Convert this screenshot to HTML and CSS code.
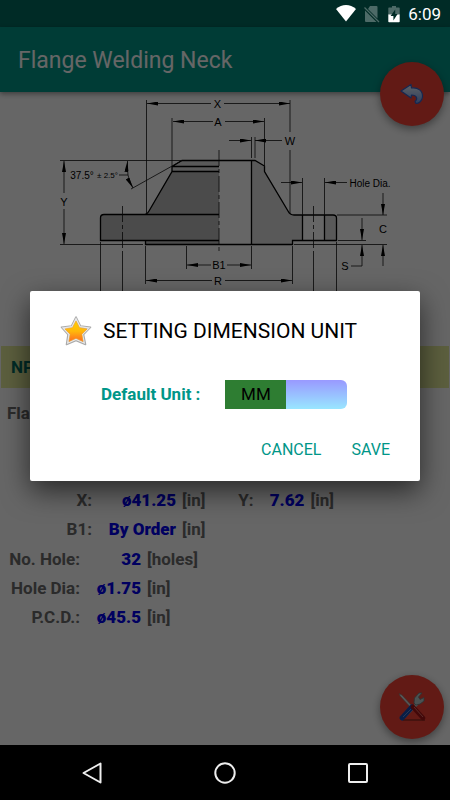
FILE: index.html
```html
<!DOCTYPE html>
<html lang="en">
<head>
<meta charset="utf-8">
<meta name="viewport" content="width=device-width, initial-scale=1">
<title>Flange Welding Neck</title>
<link rel="stylesheet" href="styles.css">
</head>
<body>
<div class="phone">
  <div class="screen">
    <header>
      <div class="statusbar">
        <svg class="wifi" viewBox="0 0 20 17" aria-hidden="true"><path d="M0 4C6-1.3 14-1.3 20 4L10 16.500z" fill="#fff"/></svg>
        <svg class="sim" viewBox="0 0 16 18" aria-hidden="true"><path d="M6 1h6.500q1 0 1 1v11.500L4 4zM1 5.500L12.500 17H2q-1 0-1-1z" fill="#4d6a67"/><path d="M.5 2.500L15 17" stroke="#4d6a67" stroke-width="1.300"/></svg>
        <svg class="battery" viewBox="0 0 12 18" aria-hidden="true"><path d="M4 1h4v1.500h3q.7 0 .7.700V10H.3V3.200q0-.7.7-.7h3z" fill="#4d6a67"/><path d="M.3 9.500h11.400v7q0 .8-.8.800H1.100q-.8 0-.8-.8z" fill="#fff"/><path d="M7.200 4.500L2.600 11h2.800v4.500L9.600 9H7.200z" fill="#002b26"/></svg>
        <span class="clock">6:09</span>
      </div>
      <h1 class="appbar">Flange Welding Neck</h1>
    </header>
    <main class="content">
      <svg class="drawing" viewBox="48 92 354 254" role="img" aria-label="Welding neck flange dimensions">
        <defs>
          <marker id="arrow" viewBox="0 0 11 4" refX="11" refY="2" markerWidth="11" markerHeight="4" markerUnits="userSpaceOnUse" orient="auto-start-reverse"><path d="M0 0L11 2L0 4z"/></marker>
        </defs>
        <path class="steel" d="M182 160.500L172 166.500V171.500L149 211Q147 214.500 143 214.500H104Q100.500 214.500 100.500 218V240.500H145.500V244H219V160.500z"/>
        <path class="cut" d="M182 160.500L172 166.500V171.500H219V160.500zM251.500 160.500H255L264.500 166V171.500L288 211Q290 215 294 215H302.500V240.500H292.500V244.500H251.500zM324.500 215H333Q336.500 215 336.500 218V240.500H324.500z"/>
        <path class="edge" d="M219 160.500H182L172 166.500V171.500L149 211Q147 214.500 143 214.500H104Q100.500 214.500 100.500 218V240.500H219M145.500 240.500V244.500H292.500V240.500H336.500V218Q336.500 215 333 215H294Q290 215 288 211L264.500 171.500V166L255 160.500H219M172 166.500H219M172 171.500H219M143 214.500H219M251.500 160.500V244.500M302.500 215V240.500M324.500 215V240.500"/>
        <path class="thin" d="M146.500 100V213M290 100V132M290 150V214M172 118V166M264.500 118V167M251.500 137V158M255 137V158M60 160.500H182M60 244.500H143M131 189L182 160.500M119 175H128M302.500 178V215M324.500 178V215M337 215H387M338 240.500H366M294 244.500H387M186.500 246V269M251.500 246V269M145.500 246V284M292.500 246V284M100.500 242V346M336.500 242V346M122.500 251V346M313.500 251V346"/>
        <path class="thin dash" d="M219 150V252M122.500 206V250M313.500 206V250"/>
        <g class="thin">
          <path class="arrow" d="M211 103.500H147"/><path class="arrow" d="M224 103.500H290"/>
          <path class="arrow" d="M213 121.500H173"/><path class="arrow" d="M225 121.500H264"/>
          <path class="arrow" d="M229 140.500H251"/><path class="arrow" d="M282 140.500H255"/>
          <path class="arrow" d="M64 193V161"/><path class="arrow" d="M64 209V244"/>
          <path class="arrow" d="M128 175Q127 166 127.500 161"/><path class="arrow" d="M128 175Q129 181 133 188"/>
          <path class="arrow" d="M281 182.500H302"/><path class="arrow" d="M347 182.500H325"/>
          <path class="arrow" d="M383 193V215"/><path class="arrow" d="M383 266V245"/>
          <path class="arrow" d="M362 218V240"/><path class="arrow" d="M351 266H362V245"/>
          <path class="arrow" d="M211 265H187"/><path class="arrow" d="M227 265H251"/>
          <path class="arrow" d="M212 280.500H146"/><path class="arrow" d="M225 280.500H292"/>
        </g>
        <g class="dims">
          <text x="217.500" y="107.500">X</text><text x="218" y="125.500">A</text><text x="290" y="144.500">W</text>
          <text class="word" x="82" y="179">37.5°</text><text class="small" x="107.500" y="178">± 2.5°</text>
          <text class="word" x="370" y="186.500">Hole Dia.</text><text x="64" y="206">Y</text><text x="383" y="233">C</text>
          <text x="345" y="270">S</text><text x="219" y="269">B1</text><text x="218" y="284.500">R</text>
        </g>
      </svg>
      <div class="size">NPS</div>
      <div class="caption">Flange</div>
      <dl class="values wide">
        <dt>X:</dt><dd><b>ø41.25</b> <span>[in]</span></dd><dt>Y:</dt><dd><b>7.62</b> <span>[in]</span></dd>
        <dt>B1:</dt><dd><b>By Order</b> <span>[in]</span></dd>
      </dl>
      <dl class="values">
        <dt>No. Hole:</dt><dd><b>32</b> <span>[holes]</span></dd>
        <dt>Hole Dia:</dt><dd><b>ø1.75</b> <span>[in]</span></dd>
        <dt>P.C.D.:</dt><dd><b>ø45.5</b> <span>[in]</span></dd>
      </dl>
    </main>
    <button class="fab back" type="button" aria-label="Back">
      <svg viewBox="0 0 24 22" aria-hidden="true"><defs><linearGradient id="bk" x2="0" y2="1"><stop stop-color="#eef6ff"/><stop offset="1" stop-color="#6f9ae8"/></linearGradient></defs><path d="M1 8L11 1.500L11.500 5C18 4 23 8 22.500 14C22 18 19 20.500 16 20.500L15 18.500C18 16 17 12 11.500 12L11 15z" fill="url(#bk)" stroke="#3863c9" stroke-width="1.200" stroke-linejoin="round"/></svg>
    </button>
    <button class="fab tools" type="button" aria-label="Settings">
      <svg viewBox="0 0 28 30" aria-hidden="true">
        <path d="M5 28H27" stroke="#962b22" stroke-width="1.500"/>
        <path d="M7 24L19 12" stroke="#b8c8c8" stroke-width="3"/>
        <path d="M16 11L16.500 6L21 1L24 1L20.500 5L22 7.500L26 5.500L26 9L22 12L18 13z" fill="#bccdcd" stroke="#687f83" stroke-width=".8"/>
        <path d="M1 1.500L4 3L16 16L14 17L2 4z" fill="#d8dddd" stroke="#8b6964" stroke-width=".6"/>
        <path d="M4 26L14 15" stroke="#174bb2" stroke-width="5" stroke-linecap="round"/>
        <path d="M5 25L13 17" stroke="#5790db" stroke-width="1"/>
        <path d="M15 15L25 26" stroke="#a61518" stroke-width="4.500" stroke-linecap="round"/>
        <path d="M16 15L25 25" stroke="#e4716a" stroke-width="1"/>
      </svg>
    </button>
    <div class="scrim">
      <form class="dialog" role="dialog" aria-labelledby="dialog-title">
        <h2 class="title" id="dialog-title">
          <svg viewBox="0 0 32 32" aria-hidden="true"><defs><linearGradient id="gold" x2="0" y2="1"><stop stop-color="#ffd000"/><stop offset=".5" stop-color="#ffb80b"/><stop offset="1" stop-color="#ff6a22"/></linearGradient><linearGradient id="rim" x2="1" y2="1"><stop stop-color="#eee"/><stop offset="1" stop-color="#aaa"/></linearGradient></defs><path d="M16 2L20.500 11L30.500 12.200L23.500 19.500L25.500 29.500L16 25.500L6.500 29.500L8 19.500L1.500 12.200L11.500 11z" fill="url(#rim)" stroke="#aaa" stroke-width="1.600" stroke-linejoin="round"/><path d="M16 3.500L20 11.700L29 13L22.500 19.300L24.300 28L16 24.500L7.700 28L9 19.300L3 13L12 11.700z" fill="none" stroke="#e8e8e8" stroke-width="1.200"/><path d="M16 6L19.500 12.700L27 14L21.800 19.300L23 26.500L16 23.200L9 26.500L10.200 19.300L5 14L12.500 12.700z" fill="url(#gold)" stroke="#f7a01b" stroke-width=".6"/></svg>
          SETTING DIMENSION UNIT
        </h2>
        <div class="setting">
          <label for="unit">Default Unit :</label>
          <span class="switch"><input id="unit" type="checkbox" role="switch"><span class="thumb">MM</span></span>
        </div>
        <div class="actions"><button type="button">CANCEL</button><button type="submit">SAVE</button></div>
      </form>
    </div>
  </div>
  <nav class="navbar" aria-label="System">
    <button type="button" aria-label="Back"><svg viewBox="0 0 22 22"><path d="M19.500 1.500V20.500L2.500 11z"/></svg></button>
    <button type="button" aria-label="Home"><svg viewBox="0 0 22 22"><circle cx="11" cy="11" r="9.700"/></svg></button>
    <button type="button" aria-label="Recent apps"><svg viewBox="0 0 22 22"><rect x="2" y="2" width="18" height="18" rx="1"/></svg></button>
  </nav>
</div>
</body>
</html>
```

FILE: styles.css
```css
* { box-sizing: border-box; }
body { margin: 0; font-family: Roboto, sans-serif; background: #000; }
h1, h2, dl, dd { margin: 0; font-weight: 400; }
button { border: 0; padding: 0; background: none; font: inherit; cursor: pointer; }

.phone { min-height: 100vh; display: flex; flex-direction: column; }
.screen { flex: 1; position: relative; background: #fff; overflow: hidden; }

.statusbar {
  height: 27px;
  padding-right: 9px;
  display: flex;
  align-items: center;
  justify-content: flex-end;
  gap: 8px;
  color: #fff;
  background: #006b60;
}
.statusbar > * { position: relative; z-index: 3; }
.wifi { width: 20px; height: 17px; }
.sim { width: 16px; height: 18px; }
.battery { width: 12px; height: 18px; }
.clock { padding-top: 2px; font-size: 17px; line-height: 25px; }

.appbar {
  position: relative;
  padding: 3px 18px 0;
  font-size: 23px;
  line-height: 62px;
  color: #fff;
  background: #009688;
  box-shadow: 0 2px 5px rgba(0, 0, 0, .4);
}

.drawing { display: block; width: 354px; max-width: 100%; margin: 0 auto; }
.steel { fill: #bbb; }
.cut { fill: #dedede; }
.edge { fill: none; stroke: #000; stroke-width: 1.300; }
.thin { fill: none; stroke: #111; stroke-width: .8; }
.arrow { marker-end: url(#arrow); }
.dash { stroke-dasharray: 16 3 4 3; }
.dims { font: 11px "Liberation Sans", sans-serif; text-anchor: middle; }
.word { font-size: 10px; }
.small { font-size: 8px; }

.size {
  margin: 0 1px;
  padding: 0 10px;
  font-size: 17px;
  font-weight: 700;
  line-height: 42px;
  color: #006b60;
  background: #e6ee9c;
}
.caption { padding: 11px 7px 58px; font-size: 17px; font-weight: 700; line-height: 29px; color: #6b6b6b; }

.values {
  display: grid;
  grid-template-columns: 80px auto;
  justify-content: start;
  font-size: 17px;
  font-weight: 700;
  line-height: 29px;
  color: #6b6b6b;
}
.values dt { text-align: right; }
.values dd { display: grid; grid-template-columns: 61px auto; gap: 6px; font-weight: 700; }
.values b { text-align: right; color: #0000f0; }
.wide { grid-template-columns: 92px auto 48px auto; padding-bottom: 1px; }
.wide dd { grid-template-columns: 84px auto; }
.wide dd:nth-of-type(2) { grid-template-columns: 51px auto; }

.fab {
  position: absolute;
  right: 6px;
  width: 64px;
  height: 64px;
  border-radius: 50%;
  display: grid;
  place-items: center;
  background: #f44336;
  box-shadow: 0 3px 8px rgba(0, 0, 0, .4);
}
.back { top: 62px; }
.tools { bottom: 6px; }
.back svg { width: 24px; height: 22px; }
.tools svg { width: 28px; height: 30px; }

.scrim {
  position: absolute;
  inset: 0;
  z-index: 2;
  padding: 27px 30px 0;
  display: flex;
  align-items: center;
  background: rgba(0, 0, 0, .6);
}
.dialog {
  width: 100%;
  padding: 20px 16px 12px 30px;
  border-radius: 2px;
  background: #fff;
  box-shadow: 0 10px 28px rgba(0, 0, 0, .6);
}
.title { display: flex; align-items: center; gap: 11px; font-size: 21px; line-height: 40px; color: #000; }
.title svg { width: 32px; height: 32px; }
.setting { margin: 29px 0 22px; padding-left: 41px; display: flex; align-items: center; gap: 25px; }
.setting label { font-size: 17px; font-weight: 700; line-height: 29px; color: #009688; }
.switch { position: relative; display: block; width: 122px; height: 29px; }
.switch input {
  appearance: none;
  width: 100%;
  height: 100%;
  margin: 0;
  display: block;
  border-radius: 6px;
  background: linear-gradient(#99f, #99e6ff);
}
.thumb {
  position: absolute;
  inset: 0 50% 0 0;
  font-size: 17px;
  line-height: 29px;
  text-align: center;
  color: #000;
  background: #2e7d32;
  pointer-events: none;
}
.switch input:checked + .thumb { inset: 0 0 0 50%; }
.actions { display: flex; justify-content: flex-end; gap: 2px; }
.actions button { padding: 0 14px; font-size: 16px; line-height: 38px; color: #009688; }

.navbar { height: 55px; padding: 0 26px; display: grid; grid-template-columns: repeat(3, 1fr); background: #000; }
.navbar button { display: grid; place-items: center; }
.navbar svg { width: 22px; height: 22px; fill: none; stroke: #eee; stroke-width: 2; stroke-linejoin: round; }
```
